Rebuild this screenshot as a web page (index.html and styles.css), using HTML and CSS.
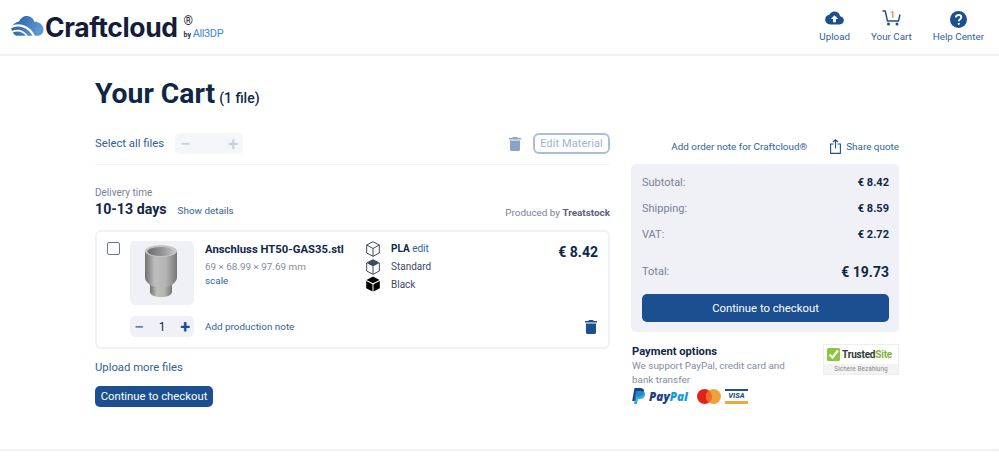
FILE: index.html
```html
<!DOCTYPE html>
<html lang="en">
<head>
<meta charset="utf-8">
<title>Your Cart</title>
<link rel="stylesheet" href="styles.css">
</head>
<body>
<header class="topbar">
  <a class="logo">
    <svg class="logo-mark" width="34" height="22" viewBox="0 0 34 22">
      <defs><linearGradient id="lg" x1="0" y1="0" x2="1" y2="0.3"><stop offset="0" stop-color="#1f5a9e"/><stop offset="1" stop-color="#5f97d2"/></linearGradient></defs>
      <path d="M1 12.500C3 9 6 7 9 6.500 10.500 3 13.500 1 16.500 1 20.500 1 23.500 3.500 24.500 7 25.500 6.700 26.500 6.800 27.500 7.200 31 8 33.500 11 33.500 14.500 33.500 18 31 20.500 28 20.800H6C3.500 19.500 1.500 16 1 12.500Z" fill="url(#lg)"/>
      <path d="M0 12.500C8 8.500 18 10 24 21" fill="none" stroke="#fff" stroke-width="2.200"/>
      <path d="M2 16.800C7.500 14.500 13 15.500 17 21" fill="none" stroke="#fff" stroke-width="1.800"/>
    </svg>
    <span class="logo-word">Craftcloud</span>
    <span class="logo-side"><span class="logo-reg">®</span><span class="logo-by">by <b>All3DP</b></span></span>
  </a>
  <nav class="nav">
    <a class="nav-item nav-upload">
      <svg width="19" height="14" viewBox="0 0 20 15"><path d="M16 5.700C15.500 2.500 13 .5 10 .5 7.500.5 5.400 2 4.500 4 2 4.300 0 6.500 0 9.200 0 12.200 2.400 14.500 5.300 14.500H15.500C18 14.500 20 12.500 20 10 20 7.700 18.300 5.900 16 5.700ZM11.600 8.500V12H8.400V8.500H6L10 4.500 14 8.500Z" fill="#1b4f8f"/></svg>
      <span>Upload</span>
    </a>
    <a class="nav-item nav-cart">
      <span class="cart-icon">
        <svg width="19" height="16" viewBox="0 0 19 16"><path d="M.5 1H3.200L5.500 11H16.500L18 4.500" fill="none" stroke="#1b4f8f" stroke-width="1.400"/><circle cx="6.500" cy="14" r="1.500" fill="#1b4f8f"/><circle cx="15" cy="14" r="1.500" fill="#1b4f8f"/></svg>
        <span class="cart-count">1</span>
      </span>
      <span>Your Cart</span>
    </a>
    <a class="nav-item nav-help">
      <svg width="17" height="17" viewBox="0 0 17 17"><circle cx="8.500" cy="8.500" r="8.500" fill="#1b4f8f"/><path d="M5.800 6.600C5.800 5 7 4 8.600 4 10.200 4 11.300 5 11.300 6.300 11.300 8.300 8.800 8.300 8.800 10.200" fill="none" stroke="#fff" stroke-width="1.800"/><circle cx="8.800" cy="12.800" r="1.100" fill="#fff"/></svg>
      <span>Help Center</span>
    </a>
  </nav>
</header>

<main class="page">
  <h1 class="title">Your Cart<small>(1 file)</small></h1>
  <div class="columns">
    <section class="left">
      <div class="select-row">
        <a class="link select-all">Select all files</a>
        <div class="qty-disabled"><span>−</span><span>+</span></div>
        <svg class="bulk-trash" width="12" height="14" viewBox="0 0 12 14"><path d="M4 0H8L8.700 1H12V2.500H0V1H3.300ZM1 3.500H11V12.500C11 13.300 10.300 14 9.500 14H2.500C1.700 14 1 13.300 1 12.500Z" fill="#8ba3c5"/></svg>
        <button class="btn-outline">Edit Material</button>
      </div>
      <div class="delivery">
        <div>
          <div class="muted-label">Delivery time</div>
          <div class="delivery-main"><strong>10-13 days</strong><a class="link small">Show details</a></div>
        </div>
        <div class="produced">Produced by <b>Treatstock</b></div>
      </div>
      <article class="card">
        <div class="card-top">
          <span class="checkbox"></span>
          <div class="thumb">
            <svg width="64" height="64" viewBox="0 0 64 64">
              <defs>
                <linearGradient id="body" x1="0" x2="1" y1="0" y2="0"><stop offset="0" stop-color="#6f6f6f"/><stop offset=".3" stop-color="#bdbdbd"/><stop offset=".65" stop-color="#b5b5b5"/><stop offset="1" stop-color="#767676"/></linearGradient>
                <linearGradient id="inner" x1="0" x2="1" y1="0" y2="0"><stop offset="0" stop-color="#6a6a6a"/><stop offset=".6" stop-color="#9a9a9a"/><stop offset="1" stop-color="#c4c4c4"/></linearGradient>
              </defs>
              <path d="M20 40V51C20 54 25 56 31 56 37 56 42 54 42 51V40Z" fill="url(#body)"/>
              <path d="M15 10V36C15 40 18 42 20 44 24 47 38 47 42 44 44 42 47 40 47 36V10Z" fill="url(#body)"/>
              <ellipse cx="31" cy="10" rx="16" ry="6" fill="#c6c6c6"/>
              <ellipse cx="31" cy="10.500" rx="13.500" ry="4.500" fill="url(#inner)"/>
            </svg>
          </div>
          <div class="file-info">
            <div class="file-name">Anschluss HT50-GAS35.stl</div>
            <div class="file-dims">69 × 68.99 × 97.69 mm</div>
            <a class="link small">scale</a>
          </div>
          <ul class="specs">
            <li>
              <svg width="14" height="16" viewBox="0 0 14 16"><path d="M7 .7 13.300 4V12L7 15.300.7 12V4ZM.7 4 7 7.500 13.300 4M7 7.500V15.300" fill="none" stroke="#3d4a63" stroke-width="1"/></svg>
              <span><b>PLA</b> <a class="link">edit</a></span>
            </li>
            <li>
              <svg width="14" height="16" viewBox="0 0 14 16"><path d="M7 .7 13.300 4V12L7 15.300.7 12V4Z" fill="none" stroke="#3d4a63" stroke-width="1"/><path d="M7 .7 13.300 4 7 7.500.7 4Z" fill="#3d4a63"/><path d="M7 7.500V15.300" stroke="#3d4a63"/></svg>
              <span>Standard</span>
            </li>
            <li>
              <svg width="14" height="16" viewBox="0 0 14 16"><path d="M7 .5 13.500 4 7 7.200.5 4ZM.2 5 6.500 8.200V15.600L.2 12.300ZM13.800 5 7.500 8.200V15.600L13.800 12.300Z" fill="#000"/></svg>
              <span>Black</span>
            </li>
          </ul>
          <div class="price">€ 8.42</div>
        </div>
        <div class="card-bottom">
          <div class="qty"><span class="qty-minus">−</span><span class="qty-num">1</span><span class="qty-plus">+</span></div>
          <a class="link small note">Add production note</a>
          <svg class="item-trash" width="12" height="14" viewBox="0 0 12 14"><path d="M4 0H8L8.700 1H12V2.500H0V1H3.300ZM1 3.500H11V12.500C11 13.300 10.300 14 9.500 14H2.500C1.700 14 1 13.300 1 12.500Z" fill="#1b4f8f"/></svg>
        </div>
      </article>
      <a class="link upload-more">Upload more files</a>
      <button class="btn-primary btn-small">Continue to checkout</button>
    </section>

    <aside class="right">
      <div class="order-links">
        <a class="link small">Add order note for Craftcloud®</a>
        <a class="link small share">
          <svg width="11" height="15" viewBox="0 0 11 15"><path d="M3.500 5H.6V14.400H10.400V5H7.500M5.500 9.500V.8M3 3 5.500.8 8 3" fill="none" stroke="#1b4f8f" stroke-width="1.100"/></svg>
          Share quote
        </a>
      </div>
      <div class="summary">
        <div class="sum-row"><span>Subtotal:</span><b>€ 8.42</b></div>
        <div class="sum-row"><span>Shipping:</span><b>€ 8.59</b></div>
        <div class="sum-row"><span>VAT:</span><b>€ 2.72</b></div>
        <div class="sum-row sum-total"><span>Total:</span><b>€ 19.73</b></div>
        <button class="btn-primary btn-wide">Continue to checkout</button>
      </div>
      <div class="payment">
        <div class="pay-text">
          <h2>Payment options</h2>
          <p>We support PayPal, credit card and bank transfer</p>
          <div class="pay-logos">
            <svg width="13" height="16" viewBox="0 0 13 16"><path d="M2.500 0H8C11 0 12.500 1.500 12 4 11.500 7 9.500 8.500 6.500 8.500H4.500L3.500 13H.2Z" fill="#253b80"/><path d="M4 3H9C12 3 13.500 4.500 13 7 12.500 10 10.500 11 7.500 11H6L5 16H2Z" fill="#179bd7" opacity=".85"/></svg>
            <span class="paypal"><i class="pp-a">Pay</i><i class="pp-b">Pal</i></span>
            <svg class="mc" width="24" height="15" viewBox="0 0 24 15"><circle cx="7.500" cy="7.500" r="7.500" fill="#e2231a"/><circle cx="16.500" cy="7.500" r="7.500" fill="#f0a03c"/><path d="M12 1.500A7.500 7.500 0 0 1 12 13.500 7.500 7.500 0 0 1 12 1.500Z" fill="#ec6a2a"/></svg>
            <span class="visa"><span>VISA</span></span>
          </div>
        </div>
        <div class="trusted">
          <div class="trusted-top">
            <svg width="13" height="13" viewBox="0 0 13 13"><rect width="13" height="13" rx="1.500" fill="#8cc63f"/><path d="M2.500 6.500 5.500 9.500 11 2.500" fill="none" stroke="#fff" stroke-width="2.200"/></svg>
            <span class="ts-a">Trusted</span><span class="ts-b">Site</span>
          </div>
          <div class="trusted-bottom">Sichere Bezahlung</div>
        </div>
      </div>
    </aside>
  </div>
</main>
<div class="footer-rule"></div>
</body>
</html>
```
FILE: styles.css
```css
* { box-sizing: border-box; }
html, body { margin: 0; padding: 0; }
body {
  background: #fff;
  font-family: Roboto, "Liberation Sans", sans-serif;
  color: #0f2747;
  height: 460px;
  overflow: hidden;
}
a { color: inherit; text-decoration: none; }
.topbar {
  height: 56px;
  border-bottom: 2px solid #f1f1f7;
  display: flex;
  align-items: flex-start;
  justify-content: space-between;
  padding: 0 15px 0 10px;
}
.logo { display: flex; align-items: flex-start; padding-top: 14px; }
.logo-mark { margin-top: 1px; }
.logo-word {
  font-family: Inter, sans-serif;
  font-weight: 700;
  font-size: 26.500px;
  letter-spacing: -.4px;
  line-height: 27px;
  color: #131c3a;
  margin-left: 1px;
}
.logo-side { display: flex; flex-direction: column; margin-left: 6px; padding-top: 1px; }
.logo-reg { font-size: 12px; line-height: 12px; color: #131c3a; }
.logo-by { font-size: 7px; font-weight: 700; line-height: 12px; margin-top: 1px; color: #222c48; white-space: nowrap; }
.logo-by b { font-size: 11px; font-weight: 400; color: #3f86dc; letter-spacing: -.4px; }
.nav { display: flex; gap: 21px; padding-top: 10px; }
.nav-item {
  display: flex; flex-direction: column; align-items: center;
  font-size: 9.800px; color: #2f5f9c; line-height: 13px;
}
.nav-item svg { display: block; }
.nav-item > svg, .cart-icon { height: 20px; margin-bottom: 0; }
.nav-upload > svg { margin-top: 1px; height: 14px; margin-bottom: 5px; }
.nav-help > svg { margin-top: 1px; height: 17px; margin-bottom: 2px; }
.cart-icon { position: relative; display: block; }
.cart-count {
  position: absolute; left: 8px; top: 0;
  font-size: 9px; font-weight: 700; color: #f0933a; line-height: 11px;
}
.page { padding: 0 100px 0 95px; }
.title {
  margin: 0;
  padding-top: 21px;
  font-size: 28.300px;
  font-weight: 700;
  line-height: 34px;
  height: 71px;
  color: #0f2747;
}
.title small { font-size: 14px; font-weight: 500; margin-left: 4px; }
.columns { display: flex; gap: 21px; align-items: flex-start; }
.left { width: 515px; }
.right { width: 268px; }
.link { color: #2f5f9c; font-size: 11.300px; }
.small { font-size: 9.900px; }
.select-row { display: flex; align-items: center; height: 33px; }
.qty-disabled {
  margin-left: 11px; width: 68px; height: 21px; border-radius: 5px;
  background: #f5f6fa; color: #c4d0e2; font-size: 18px; line-height: 21px; font-weight: 500;
  display: flex; justify-content: space-between; align-items: center; padding: 0 5px;
}
.bulk-trash { margin-left: auto; margin-right: 12px; }
.btn-outline {
  font: 400 11px Roboto, sans-serif; letter-spacing: .1px;
  color: #9db4d4; background: #fff;
  width: 77px; height: 21px; padding: 0;
  border: 2px solid #a9bedb; border-radius: 6px;
}
.delivery {
  border-top: 1px solid #f1f1f7;
  margin-top: 4px;
  padding-top: 20px;
  height: 66px;
  display: flex; justify-content: space-between; align-items: flex-end;
  padding-bottom: 9px;
}
.muted-label { font-size: 10px; color: #7a8097; line-height: 13px; }
.delivery-main { display: flex; align-items: baseline; gap: 11px; line-height: 20px; }
.delivery-main strong { font-size: 14.200px; font-weight: 700; }
.produced { font-size: 9.900px; color: #7a8097; line-height: 14px; margin-bottom: 1px; }
.produced b { font-weight: 700; color: #5b6176; }
.card {
  width: 515px; height: 119px;
  border: 2px solid #f1f1f7; border-radius: 6px;
  padding: 9px 10px 0 10px;
}
.card-top { display: flex; align-items: flex-start; height: 75px; }
.checkbox {
  width: 13px; height: 13px; margin-top: 1px; flex: none;
  border: 1.500px solid #6f7596; border-radius: 2px;
}
.thumb {
  width: 64px; height: 64px; margin-left: 10px; flex: none;
  background: #f0f1f6; border-radius: 5px;
}
.thumb svg { display: block; }
.file-info { width: 161px; margin-left: 11px; line-height: 14px; flex: none; }
.file-name { font-size: 11.300px; font-weight: 700; line-height: 16px; margin-top: 1px; color: #0f2747; }
.file-dims { font-size: 9.900px; color: #858aa0; margin-top: 2px; line-height: 14px; }
.file-info .link { display: block; }
.specs { list-style: none; margin: -1px 0 0; padding: 0; width: 180px; flex: none; }
.specs li { display: flex; align-items: center; height: 17.700px; font-size: 10px; color: #3d4a63; }
.specs svg { margin-right: 11px; flex: none; }
.specs b { color: #0f2747; }
.specs .link { font-size: 10px; }
.price { font-size: 14px; font-weight: 700; flex: 1; text-align: right; line-height: 18px; margin-top: 2px; }
.card-bottom { display: flex; align-items: center; height: 21px; }
.qty {
  margin-left: 23px; width: 64px; height: 21px; border-radius: 5px;
  background: #f0f1f6; display: flex; justify-content: space-between; align-items: center;
  padding: 0 4px; font-size: 12px;
}
.qty-minus { color: #5f82ad; font-size: 18px; font-weight: 500; line-height: 21px; }
.qty-plus { color: #1b4f8f; font-size: 18px; font-weight: 700; line-height: 21px; }
.note { margin-left: 11px; }
.item-trash { margin-left: auto; margin-right: 1px; }
.upload-more { display: block; margin-top: 12px; line-height: 14px; }
.btn-primary {
  font: 400 11.300px Roboto, sans-serif;
  background: #1b4f8f; color: #fff; border: 0; border-radius: 5px; padding: 0; display: block;
}
.btn-small { width: 118px; height: 21px; margin-top: 11px; }
.order-links {
  display: flex; justify-content: flex-end; align-items: center; height: 33px;
  gap: 23px; padding-top: 6px;
}
.share { display: flex; align-items: center; gap: 5px; }
.summary {
  margin-top: 4px; height: 168px; background: #f0f1f6; border-radius: 5px;
  padding: 5px 10px 0 11px;
}
.sum-row {
  display: flex; justify-content: space-between; align-items: center;
  height: 26px; font-size: 11px; color: #7a8097;
}
.sum-row b { color: #0f2747; font-size: 11px; font-weight: 700; }
.sum-total { margin-top: 11px; height: 27px; }
.sum-total b { font-size: 14px; }
.btn-wide { width: 247px; height: 28px; margin-top: 9px; }
.payment { display: flex; justify-content: space-between; margin-top: 12px; }
.pay-text { width: 170px; }
.pay-text h2 { margin: 0; font-size: 11.200px; font-weight: 700; line-height: 15px; color: #0f2747; padding-left: 1px; }
.pay-text p { margin: 0; font-size: 9.900px; line-height: 14px; color: #858aa0; padding-left: 1px; }
.pay-logos { display: flex; align-items: center; margin-top: 1px; padding-left: 1px; }
.paypal { font-size: 11.700px; font-weight: 800; font-family: "Open Sans", sans-serif; margin-left: 4px; }
.paypal i { font-style: italic; }
.pp-a { color: #253b80; }
.pp-b { color: #179bd7; }
.mc { margin-left: 9px; }
.visa {
  margin-left: 4px; width: 23px; height: 15px; background: #fff;
  border-top: 2px solid #1f4e8c; border-bottom: 3px solid #f0a83c;
  display: flex; align-items: center; justify-content: center;
}
.visa span { color: #1f4e8c; font-size: 7.500px; font-weight: 800; font-style: italic; }
.trusted { width: 76px; height: 31px; border: 1px solid #eee; background: #fff; }
.trusted-top {
  display: flex; align-items: center; height: 19px; padding-left: 3px;
  font-size: 10px; font-weight: 700; letter-spacing: -.2px;
}
.trusted-top svg { margin-right: 2px; }
.ts-a { color: #2d3a3a; }
.ts-b { color: #7fb23c; }
.trusted-bottom {
  height: 10px; background: #f3f3f3; color: #8a8a8a; font-size: 6.500px; text-align: center; line-height: 10px;
}
.footer-rule { position: absolute; left: 0; right: 0; top: 449px; height: 2px; background: #f1f1f7; }
```
